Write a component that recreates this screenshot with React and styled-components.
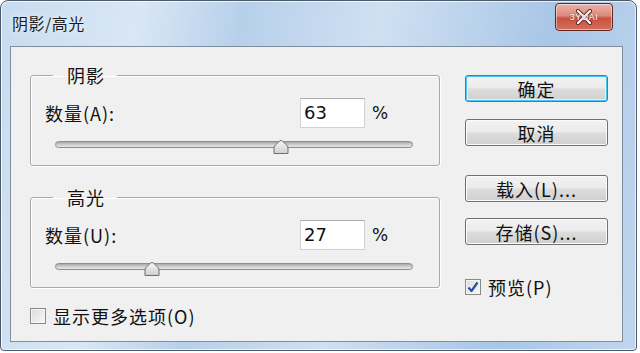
import React from "react";
import styled, { createGlobalStyle } from "styled-components";

const Global = createGlobalStyle`
  html, body { margin: 0; padding: 0; background: #ffffff; }
  body { width: 640px; height: 353px; overflow: hidden; }
  * { box-sizing: border-box; }
`;

const FONT = `"Noto Sans CJK SC", "Liberation Sans", sans-serif`;

const Window = styled.div`
  width: 637px;
  height: 351px;
  border: 1px solid #4d5b6b;
  border-radius: 8px 8px 4px 4px;
  background: linear-gradient(100deg, #c8dcf0 0%, #d9e7f5 20%, #b7d0ea 35%, #cfe0f2 55%, #a9c6e6 80%, #c0d6ee 100%);
  box-shadow: inset 0 0 0 1px rgba(255,255,255,0.7);
  display: flex;
  flex-direction: column;
  padding: 0 13px 8px 9px;
  font-family: ${FONT};
`;

const TitleBar = styled.div`
  height: 45px;
  display: flex;
  align-items: flex-start;
  justify-content: space-between;
`;

const Title = styled.div`
  font-size: 16px;
  line-height: 20px;
  letter-spacing: 0.5px;
  color: #1b1b1b;
  padding: 12px 0 0 2px;
  text-shadow: 0 0 6px rgba(255,255,255,0.9);
`;

const CloseButton = styled.div`
  position: relative;
  width: 58px;
  height: 28px;
  margin-top: 2px;
  margin-right: 10px;
  border: 1px solid #5e2a22;
  border-radius: 4px;
  background: linear-gradient(#ebb3a8 0%, #dc8a7d 45%, #c9523f 55%, #d2705c 100%);
  box-shadow: inset 0 0 0 1px rgba(255,255,255,0.45);
  display: flex;
  align-items: center;
  justify-content: center;
`;

const Watermark = styled.span`
  position: absolute;
  left: 0;
  right: 0;
  top: 8px;
  text-align: center;
  font-family: "Liberation Sans", sans-serif;
  font-size: 9px;
  letter-spacing: 0.5px;
  color: #ffffff;
  text-shadow: 0 0 2px #7a2a20;
`;

const Client = styled.div`
  flex: 1;
  background: #f0f0f0;
  border: 1px solid #7f8d9c;
  display: flex;
  padding: 18px 0 0 19px;
`;

const LeftCol = styled.div`
  width: 410px;
  display: flex;
  flex-direction: column;
`;

const Group = styled.fieldset`
  margin: 0 0 ${(p) => p.$gap || 0}px 0;
  padding: 0 0 14px 14px;
  border: 1px solid #a9a9a9;
  border-radius: 3px;
  box-shadow: inset 1px 1px 0 #ffffff, 1px 1px 0 #ffffff;
  min-width: 0;
`;

const Legend = styled.legend`
  margin-left: 8px;
  padding: 0 12px 0 14px;
  font-size: 18px;
  line-height: 20px;
  letter-spacing: 1px;
  color: #111;
`;

const FieldRow = styled.div`
  margin-top: 13px;
  height: 30px;
  display: flex;
  align-items: center;
`;

const Label = styled.div`
  width: 255px;
  font-size: 18px;
  letter-spacing: 1px;
  color: #111;
`;

const NumInput = styled.div`
  width: 65px;
  height: 30px;
  background: #ffffff;
  border: 1px solid #cdd3d9;
  border-top-color: #abadb3;
  padding: 2px 0 0 3px;
  font-family: "DejaVu Sans", "Liberation Sans", sans-serif;
  font-size: 18px;
  line-height: 24px;
  color: #111;
`;

const Unit = styled.div`
  margin-left: 7px;
  font-family: "DejaVu Sans", "Liberation Sans", sans-serif;
  font-size: 17px;
  color: #111;
`;

const SliderWrap = styled.div`
  margin: 9px 0 0 10px;
  width: 358px;
  height: 14px;
  position: relative;
  display: flex;
  align-items: center;
`;

const Track = styled.div`
  width: 100%;
  height: 7px;
  border: 1px solid #8e8e8e;
  border-radius: 4px;
  background: linear-gradient(#a8a8a8, #d4d4d4 60%, #e6e6e6);
`;

const ThumbBox = styled.div`
  position: absolute;
  top: -1px;
  width: 18px;
  height: 16px;
  margin-left: -9px;
`;

const CheckRow = styled.div`
  display: flex;
  align-items: center;
  gap: 7px;
  margin-top: ${(p) => p.$mt || 0}px;
  font-size: 18px;
  letter-spacing: 1px;
  color: #111;
`;

const Box = styled.div`
  width: 16px;
  height: 16px;
  border: 1px solid #8a8a8a;
  background: linear-gradient(135deg, #dcdcdc, #f8f8f8);
  box-shadow: inset 0 0 0 1px #f4f4f4;
  display: flex;
  align-items: center;
  justify-content: center;
`;

const RightCol = styled.div`
  margin-left: 25px;
  width: 143px;
  padding-top: 10px;
  display: flex;
  flex-direction: column;
`;

const Button = styled.div`
  height: 27px;
  margin-top: ${(p) => p.$mt || 0}px;
  border: 1px solid ${(p) => (p.$default ? "#3c7fb1" : "#707070")};
  border-radius: 3px;
  background: linear-gradient(#f2f2f2 0%, #ebebeb 48%, #dddddd 52%, #cfcfcf 100%);
  box-shadow: ${(p) =>
    p.$default
      ? "inset 0 0 0 1px #48c6f5, inset 0 0 0 2px #e0f2fc"
      : "inset 0 0 0 1px #fcfcfc"};
  display: flex;
  align-items: center;
  justify-content: center;
  font-size: 18px;
  letter-spacing: 1px;
  color: #111;
`;

function Thumb({ value }) {
  return (
    <ThumbBox style={{ left: `${value}%` }}>
      <svg width="18" height="16" viewBox="0 0 18 16">
        <defs>
          <linearGradient id="tg" x1="0" y1="0" x2="0" y2="1">
            <stop offset="0" stopColor="#f6f6f6" />
            <stop offset="1" stopColor="#cfcfcf" />
          </linearGradient>
        </defs>
        <path
          d="M2 14.5 L2 9 Q2 7 4 5.5 L7.5 2 Q9 0.8 10.5 2 L14 5.5 Q16 7 16 9 L16 14.5 Z"
          fill="url(#tg)"
          stroke="#6f6f6f"
          strokeWidth="1"
        />
      </svg>
    </ThumbBox>
  );
}

function Slider({ value }) {
  return (
    <SliderWrap>
      <Track />
      <Thumb value={value} />
    </SliderWrap>
  );
}

function Section({ title, label, value, gap }) {
  return (
    <Group $gap={gap}>
      <Legend>{title}</Legend>
      <FieldRow>
        <Label>{label}</Label>
        <NumInput>{value}</NumInput>
        <Unit>%</Unit>
      </FieldRow>
      <Slider value={value} />
    </Group>
  );
}

function CheckBox({ checked }) {
  return (
    <Box>
      {checked && (
        <svg width="12" height="12" viewBox="0 0 12 12">
          <path d="M1.5 6.5 L4.5 10 L10.5 1.5" fill="none" stroke="#2b4f9e" strokeWidth="2.2" strokeLinejoin="round" />
        </svg>
      )}
    </Box>
  );
}

export default function App() {
  return (
    <>
      <Global />
      <Window>
        <TitleBar>
          <Title>阴影/高光</Title>
          <CloseButton>
            <svg width="18" height="16" viewBox="0 0 18 16">
              <path d="M3 2 L15 14 M15 2 L3 14" stroke="#5a1f17" strokeWidth="4" strokeLinecap="round" />
              <path d="M3 2 L15 14 M15 2 L3 14" stroke="#ffffff" strokeWidth="2.4" strokeLinecap="round" />
            </svg>
            <Watermark>3YUAI</Watermark>
          </CloseButton>
        </TitleBar>
        <Client>
          <LeftCol>
            <Section title="阴影" label="数量(A):" value={63} gap={21} />
            <Section title="高光" label="数量(U):" value={27} />
            <CheckRow $mt={15}>
              <CheckBox />
              <span>显示更多选项(O)</span>
            </CheckRow>
          </LeftCol>
          <RightCol>
            <Button $default>确定</Button>
            <Button $mt={17}>取消</Button>
            <Button $mt={29}>载入(L)...</Button>
            <Button $mt={16}>存储(S)...</Button>
            <CheckRow $mt={29}>
              <CheckBox checked />
              <span>预览(P)</span>
            </CheckRow>
          </RightCol>
        </Client>
      </Window>
    </>
  );
}
